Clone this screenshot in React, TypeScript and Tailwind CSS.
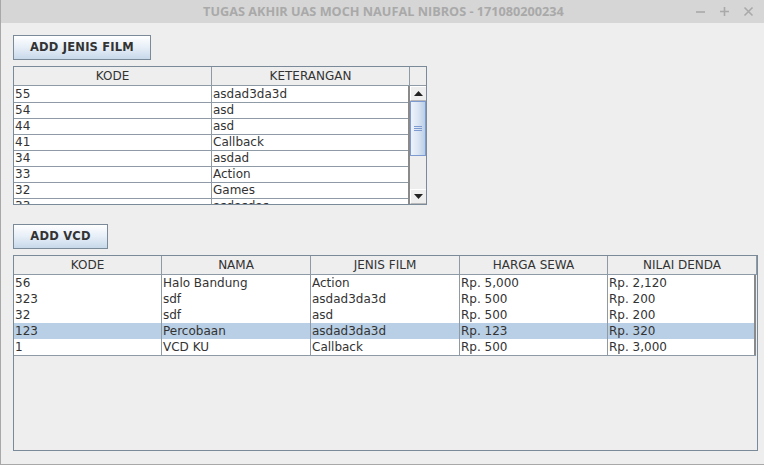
import React from "react"

const jenisFilm = [
  ["55", "asdad3da3d"],
  ["54", "asd"],
  ["44", "asd"],
  ["41", "Callback"],
  ["34", "asdad"],
  ["33", "Action"],
  ["32", "Games"],
  ["33", "asdasdas"],
]

const vcd = [
  ["56", "Halo Bandung", "Action", "Rp. 5,000", "Rp. 2,120"],
  ["323", "sdf", "asdad3da3d", "Rp. 500", "Rp. 200"],
  ["32", "sdf", "asd", "Rp. 500", "Rp. 200"],
  ["123", "Percobaan", "asdad3da3d", "Rp. 123", "Rp. 320"],
  ["1", "VCD KU", "Callback", "Rp. 500", "Rp. 3,000"],
]

function Button({ label, width }: { label: string; width: string }) {
  return (
    <button
      className={`${width} h-[25px] border border-[#7a8a99] bg-gradient-to-b from-[#ffffff] via-[#e6eef7] to-[#c8d9ea] text-[11.5px] font-bold text-[#333333] tracking-[0.2px]`}
    >
      {label}
    </button>
  )
}

function Arrow({ up }: { up?: boolean }) {
  return (
    <div className="h-[15px] flex items-center justify-center border-t border-l border-white border-b border-b-[#b8b8b8] bg-[#eeeeee]">
      <svg width="9" height="5" viewBox="0 0 9 5">
        {up ? <path d="M0 5 L4.5 0 L9 5 Z" fill="#222" /> : <path d="M0 0 L4.5 5 L9 0 Z" fill="#222" />}
      </svg>
    </div>
  )
}

export default function App() {
  return (
    <div
      className="w-[764px] h-[465px] bg-[#eeeeee] border-l border-b border-[#a8a8a8] flex flex-col overflow-hidden"
      style={{ fontFamily: '"DejaVu Sans", sans-serif' }}
    >
      {/* Title bar */}
      <div className="h-[23px] shrink-0 bg-[#d6d6d6] flex items-center relative">
        <div
          className="flex-1 text-center text-[12.7px] font-bold text-[#a9a9a9] pl-[2px]"
          style={{ fontFamily: '"Open Sans", sans-serif' }}
        >
          TUGAS AKHIR UAS MOCH NAUFAL NIBROS - 171080200234
        </div>
        <div className="absolute right-[10px] top-0 h-[23px] flex items-center gap-[13px] text-[#a9a9a9]">
          <svg width="11" height="11" viewBox="0 0 11 11">
            <path d="M1 6 H10" stroke="currentColor" strokeWidth="1.6" />
          </svg>
          <svg width="11" height="11" viewBox="0 0 11 11">
            <path d="M1 5.5 H10 M5.5 1 V10" stroke="currentColor" strokeWidth="1.6" />
          </svg>
          <svg width="11" height="11" viewBox="0 0 11 11">
            <path d="M1.5 1.5 L9.5 9.5 M9.5 1.5 L1.5 9.5" stroke="currentColor" strokeWidth="1.6" />
          </svg>
        </div>
      </div>

      <div className="flex flex-col pl-[12px] pt-[12px] text-[12px] text-[#333333]">
        <Button label="ADD JENIS FILM" width="w-[138px]" />

        {/* Jenis film table */}
        <div className="mt-[6px] w-[414px] h-[139px] border border-[#7a8a99] bg-white flex overflow-hidden">
          <div className="w-[396px] flex flex-col">
            <div className="grid grid-cols-[198px_198px] h-[19px] bg-[#eeeeee]">
              <div className="border-r border-b border-[#8e9aa6] text-center leading-[18px]">KODE</div>
              <div className="border-r border-b border-[#8e9aa6] text-center leading-[18px]">KETERANGAN</div>
            </div>
            {jenisFilm.map((r, i) => (
              <div key={i} className="grid grid-cols-[198px_198px] h-[16px] shrink-0">
                <div className="border-r border-b border-[#8e9aa6] pl-[1px] leading-[16px]">{r[0]}</div>
                <div className="border-r-2 border-r-[#8a8a8a] border-b border-b-[#8e9aa6] pl-[1px] leading-[16px]">{r[1]}</div>
              </div>
            ))}
          </div>
          {/* Scrollbar */}
          <div className="w-[16px] flex flex-col bg-[#eeeeee]">
            <div className="h-[19px] border-b border-[#8e9aa6] bg-[#eeeeee]" />
            <Arrow up />
            <div className="h-[55px] border border-[#7d9bd0] bg-gradient-to-r from-[#eef3fa] via-[#dbe6f3] to-[#b9cfe6] flex flex-col items-center justify-center gap-[1px]">
              <div className="w-[8px] h-[1px] bg-[#7d9bd0]" />
              <div className="w-[8px] h-[1px] bg-[#7d9bd0]" />
              <div className="w-[8px] h-[1px] bg-[#7d9bd0]" />
            </div>
            <div className="flex-1" />
            <Arrow />
          </div>
        </div>

        <div className="mt-[19px]">
          <Button label="ADD VCD" width="w-[95px]" />
        </div>

        {/* VCD table */}
        <div className="mt-[6px] w-[745px] h-[196px] border border-[#7a8a99] bg-[#eeeeee] flex flex-col overflow-hidden">
          <div className="grid grid-cols-[148px_149px_149px_148px_149px] h-[19px] w-[743px]">
            {["KODE", "NAMA", "JENIS FILM", "HARGA SEWA", "NILAI DENDA"].map((h) => (
              <div key={h} className="border-r border-b border-[#8e9aa6] text-center leading-[18px]">
                {h}
              </div>
            ))}
          </div>
          {vcd.map((r, i) => (
            <div
              key={i}
              className={`grid grid-cols-[148px_149px_149px_148px_148px] h-[16px] w-[742px] border-r-2 border-r-[#8a8a8a] ${
                i === 3 ? "bg-[#b8cfe5]" : "bg-white"
              }`}
            >
              {r.map((c, j) => (
                <div
                  key={j}
                  className={`${j < 4 ? "border-r" : ""} border-b border-[#8e9aa6] pl-[1px] leading-[16px] whitespace-nowrap`}
                >
                  {c}
                </div>
              ))}
            </div>
          ))}
        </div>
      </div>
    </div>
  )
}
